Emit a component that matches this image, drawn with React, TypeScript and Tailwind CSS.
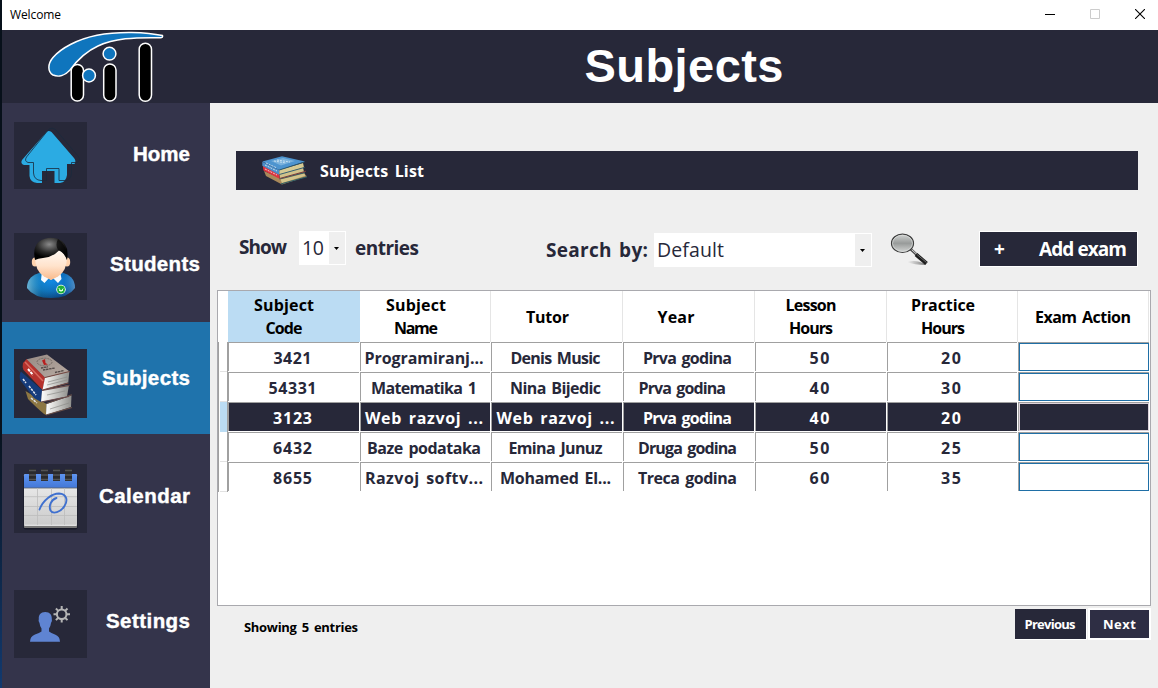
import { useLayoutEffect, useRef, useState } from "react";
import type { ReactNode } from "react";

const comic = "font-['Comic_Sans_MS','Open_Sans',sans-serif]";

/** One line of text, tracked so that it spans `w` pixels. */
function Fit({ w, children, className = "" }: { w: number; children: string; className?: string }) {
  const ref = useRef<HTMLSpanElement>(null);
  const [ls, setLs] = useState(0);
  useLayoutEffect(() => {
    const el = ref.current;
    if (!el || children.length < 2) return;
    el.style.letterSpacing = "0px";
    const next = (w - el.getBoundingClientRect().width) / (children.length - 1);
    el.style.letterSpacing = `${next}px`;
    setLs(next);
  }, [w, children]);
  return (
    <span className={`inline-block whitespace-pre leading-none ${className}`}>
      <span ref={ref} className="inline-block" style={{ letterSpacing: `${ls}px`, marginRight: `${-ls}px` }}>
        {children}
      </span>
    </span>
  );
}

function Logo() {
  return (
    <svg width="118" height="72" viewBox="46 31 118 72" className="block">
      <g stroke="#fff" strokeWidth="1.5">
        <rect x="71.2" y="64.5" width="12.3" height="36.5" rx="6.1" fill="#000" />
        <rect x="103.7" y="64" width="12.3" height="37" rx="6.1" fill="#000" />
        <rect x="139.2" y="43.2" width="12.3" height="58" rx="6.1" fill="#000" />
        <circle cx="89" cy="75.5" r="6.4" fill="#0f75bd" />
        <path
          d="M162.5 35.6C147 31.8 118 31 97 35.2C78 39 61 48 53 57.5C47.500 64 47.500 71.500 53 75C58.500 77.500 65 75.500 70 70C78 59 87 51 98 46C114 38.500 134 37.200 160.500 37.800Q163 37.800 162.500 35.600Z"
          fill="#0f75bd"
        />
        <circle cx="109.500" cy="53.700" r="6.400" fill="#0f75bd" />
      </g>
    </svg>
  );
}

function HomeIcon() {
  return (
    <svg width="73" height="67" viewBox="0 0 73 67" className="block">
      <path
        d="M32.500 10Q34.500 8 37.500 10L60 36Q62.500 39 60.500 42H53V53Q52 60 46 61H40.500V49H28V61H23Q16 60 15.500 54V43H10Q6 41.500 8 38Z"
        fill="#2babe3"
      />
      <path
        d="M35 7Q38 5 41.500 7.500L64 34Q67.500 38.500 63 40.500H57.500V51Q57 58 51 58.500H45V46.500H32.500V58.500H27Q20 58 19.500 51V40.500H14Q10 39 12.500 35Z"
        fill="none"
        stroke="#1a2a3c"
        strokeWidth=".8"
      />
    </svg>
  );
}

function StudentIcon() {
  return (
    <svg width="73" height="67" viewBox="0 0 73 67" className="block">
      <defs>
        <radialGradient id="shirt" cx=".5" cy=".35" r=".65">
          <stop offset="0" stopColor="#0b86e8" />
          <stop offset=".6" stopColor="#0868b4" />
          <stop offset="1" stopColor="#063e78" />
        </radialGradient>
        <linearGradient id="shine" x1="0" y1="0" x2="1" y2="0">
          <stop offset="0" stopColor="#8fd4e8" stopOpacity=".75" />
          <stop offset=".3" stopColor="#2aa0c8" stopOpacity=".25" />
          <stop offset=".75" stopColor="#3a90e0" stopOpacity=".1" />
          <stop offset="1" stopColor="#9cc8f0" stopOpacity=".5" />
        </linearGradient>
        <linearGradient id="skin" x1="0" y1="0" x2="0" y2="1">
          <stop offset=".2" stopColor="#fff6ee" />
          <stop offset=".6" stopColor="#ffe3cc" />
          <stop offset="1" stopColor="#f9b98a" />
        </linearGradient>
        <radialGradient id="hair" cx=".45" cy=".3" r=".6">
          <stop offset="0" stopColor="#8a8a8a" />
          <stop offset=".6" stopColor="#2a2a2a" />
          <stop offset="1" stopColor="#000" />
        </radialGradient>
      </defs>
      <path d="M29 39Q13 42 13 55Q20 65 37 65Q54 65 61 55Q61 42 46 39Z" fill="url(#shirt)" />
      <path d="M29 39Q13 42 13 55Q20 65 37 65Q54 65 61 55Q61 42 46 39Z" fill="url(#shine)" />
      <path d="M28 38L27 47L30.500 50L35 45L37 47L39 45L44 50L47.500 46L46 38Z" fill="#f7fbff" />
      <ellipse cx="21" cy="29" rx="3.200" ry="4.500" fill="#ffd2ad" />
      <ellipse cx="53" cy="29" rx="3.200" ry="4.500" fill="#ffd2ad" />
      <path d="M21 24Q21 12 37 12Q53 12 53 24Q53 38 44 43.500L37 47L30 43.500Q21 38 21 24Z" fill="url(#skin)" />
      <path
        d="M21 27Q17 8 34 5Q37 4.300 43 5.500Q56 10 53 27Q50 19 45 17.500Q39 24 29 25Q24 25.500 21 27Z"
        fill="url(#hair)"
      />
      <path d="M44 6Q54 13 53 27Q50 19 44 17Q41 12 44 6Z" fill="#050505" opacity=".7" />
      <circle cx="47" cy="56.500" r="4.700" fill="#fff" />
      <circle cx="47" cy="56.500" r="3.900" fill="#1fae3a" />
      <path d="M44.800 55L47 58.500L49.200 55.500M45 57.500H49" stroke="#dcffdc" strokeWidth="1" fill="none" />
    </svg>
  );
}

function BooksIcon() {
  return (
    <svg width="73" height="69" viewBox="0 0 73 69" className="block">
      <defs>
        <linearGradient id="pages" x1="0" y1="0" x2="1" y2="0">
          <stop offset="0" stopColor="#fff" />
          <stop offset=".35" stopColor="#d9d9d6" />
          <stop offset="1" stopColor="#8f8f8c" />
        </linearGradient>
        <linearGradient id="cover" x1="0" y1="0" x2="1" y2="1">
          <stop offset="0" stopColor="#978b84" />
          <stop offset="1" stopColor="#b8aba3" />
        </linearGradient>
      </defs>
      <path d="M11.500 42L32.500 55L32 66Q29 65 14 50Z" fill="#8d7743" />
      <path d="M32.500 55L57.500 46.500L57 58L32 66Z" fill="url(#pages)" />
      <path d="M32.500 54.500L57.800 45.800M32 66L58 58.500" stroke="#6b5149" strokeWidth="1.200" />
      <path d="M7 22.500L28 41L27 53L20 49L6 31Q5 25 7 22.500Z" fill="#163c7c" />
      <path d="M28 41.500L55 36L53 47.500L27 53Z" fill="url(#pages)" />
      <path d="M28 41.500L55.500 36.300M27 53L55 47.500" stroke="#6a4a4a" strokeWidth="1.200" />
      <path d="M12.700 10L9 14Q8 18 9.500 21L28.500 41Q30 35 31 28.500Z" fill="#b5322d" />
      <path d="M11 13L29 32" stroke="#da6a5f" strokeWidth="1.500" />
      <path d="M31 28.500L55.300 22.500L54.300 33.500L28.500 41Z" fill="url(#pages)" />
      <path d="M12.700 10.300L33 5.500L55.500 22.500L31 28.500Z" fill="url(#cover)" />
      <path d="M31 28.500L55.500 22.500M28.500 41L54.500 34" stroke="#754a44" strokeWidth="1.200" />
      <ellipse cx="30.500" cy="13" rx="7.500" ry="3.800" fill="none" stroke="#756a64" strokeWidth="1" strokeDasharray="2 1" />
      <path d="M28 11.500L31 10L31.500 14L34 15.500L30 16Z" fill="#b81f1f" />
      <path d="M27 19L34 17.800M29 21L41 19M41 23.500L50 21.500" stroke="#514746" strokeWidth="1.300" strokeDasharray="2.500 .6" />
      <path d="M14 20L19 26" stroke="#fff" strokeWidth="2" strokeDasharray="3 .8" />
      <path d="M9 30L12 34M15 37L22 46M17 49L23 54" stroke="#e3e6ee" strokeWidth="1.500" strokeDasharray="2.500 1" />
      <path d="M34 33L53 28M33 36L53 31M33 46L51 42M36 60L55 54" stroke="#8b8b88" strokeWidth=".7" />
    </svg>
  );
}

function CalendarIcon() {
  return (
    <svg width="73" height="69" viewBox="0 0 73 69" className="block">
      <defs>
        <linearGradient id="sheet" x1="0" y1="0" x2="0" y2="1">
          <stop offset="0" stopColor="#f1f1f1" />
          <stop offset="1" stopColor="#c9c9c9" />
        </linearGradient>
        <linearGradient id="band" x1="0" y1="0" x2="0" y2="1">
          <stop offset="0" stopColor="#5d94f2" />
          <stop offset="1" stopColor="#4377d6" />
        </linearGradient>
      </defs>
      <rect x="9.500" y="12" width="54" height="53.500" rx="2" fill="#171827" />
      <rect x="10" y="10" width="53" height="53.700" rx="1.500" fill="url(#sheet)" />
      <path d="M10 61.500H63V62.500Q63 64 61 64H12Q10 64 10 62.500Z" fill="#777" />
      <path d="M10.500 61.300H62.500" stroke="#f2f2f2" />
      <path d="M10 24V11.500Q10 10 11.500 10H61.500Q63 10 63 11.500V24Z" fill="url(#band)" />
      <path d="M10 24H63" stroke="#5c5f66" strokeWidth=".8" />
      <path d="M23.500 24V61M37.500 24V61M50.500 24V61M10 32.700H63M10 42.500H63M10 51.500H63" stroke="#bdbdbd" strokeWidth=".8" />
      <g fill="#2a2a2c">
        <rect x="15" y="5" width="7" height="12" />
        <rect x="27" y="5" width="7" height="12" />
        <rect x="39" y="5" width="7" height="12" />
        <rect x="51" y="5" width="7" height="12" />
      </g>
      <path
        d="M15 6.500H22M27 6.500H34M39 6.500H46M51 6.500H58M15 11H22M27 11H34M39 11H46M51 11H58M15 15.500H22M27 15.500H34M39 15.500H46M51 15.500H58"
        stroke="#525355"
        strokeWidth="1.500"
      />
      <path
        d="M25.500 45.500C29 36 38 29.500 45 29.500C53 30 54 36.500 50.500 42C46.500 48.500 39 50.500 36.500 46.500C34.500 42 37 35.500 42.500 34"
        fill="none"
        stroke="#3f70cf"
        strokeWidth="1.900"
        strokeLinecap="round"
      />
    </svg>
  );
}

function SettingsIcon() {
  return (
    <svg width="73" height="68" viewBox="0 0 73 68" className="block">
      <path
        d="M31.300 22C36 22 38 25 37.800 29Q38.500 31.500 37 33Q36.500 37 35 38.500V41.500Q37 43 41 44.500Q46 46.500 46 51.800H16Q16 46.500 21 44.500Q25.500 43 27.500 41.500V38.500Q26 37 25.500 33Q24 31.500 24.800 29C24.500 25 26.500 22 31.300 22Z"
        fill="#5f84d2"
      />
      <circle cx="47.700" cy="24.300" r="4.800" fill="none" stroke="#b5b5b5" strokeWidth="2.100" />
      <path
        d="M47.700 16V19.500M47.700 29V32.600M39.500 24.300H43M52.500 24.300H56M41.900 18.500L44.300 20.900M51.100 27.700L53.500 30.100M53.500 18.500L51.100 20.900M44.300 27.700L41.900 30.100"
        stroke="#b5b5b5"
        strokeWidth="2"
      />
    </svg>
  );
}

function SmallBooks() {
  return (
    <svg width="46" height="29" viewBox="0 0 46 29" className="block">
      <path d="M2 15L18 22L42 17L45 20.500L20 28.500L4 20Z" fill="#a9895a" />
      <path d="M18.500 23.500L42.500 17.500L43 20L20 27Z" fill="#d3c58c" />
      <path d="M19 27.900L45 20.800M17.500 23L43 16.500" stroke="#2f6168" strokeWidth="1" />
      <path d="M.8 9.500L17.500 18V22.800L1.500 14.500Z" fill="#e0323d" />
      <path d="M17.500 18L41 11.500L42 16L18 22.500Z" fill="#d0c28a" />
      <path d="M17.500 22.500L44 15.200" stroke="#7d3b3b" strokeWidth="1" />
      <path d="M.3 5.700L17.300 14V19L.3 9.800Z" fill="#4b8fc9" />
      <path d="M17.300 14L41 7L42 11.500L17.300 18.500Z" fill="#d6ca93" />
      <path d="M.3 5.500L20 .3L43 5.500L17.300 14Z" fill="#4d94cf" />
      <path d="M9 5L21 2L33 5L19 9.500Z" fill="#84b8df" opacity=".8" />
      <path d="M12 5L24 7M15 4L28 6M4 7L15 12" stroke="#d8ebf6" strokeWidth=".8" strokeDasharray="2 1" />
      <path d="M17.300 18.500L43 11.300M17.300 14L42.500 6" stroke="#27566d" strokeWidth=".9" />
      <path d="M3 9L15 15M3 13L15 19" stroke="#e8eef6" strokeWidth=".8" strokeDasharray="2 1" />
    </svg>
  );
}

function Magnifier() {
  return (
    <svg width="40" height="36" viewBox="0 0 40 36" className="block">
      <defs>
        <linearGradient id="lens" x1="0" y1="0" x2="0" y2="1">
          <stop offset="0" stopColor="#d3d5d4" />
          <stop offset=".5" stopColor="#989b9a" />
          <stop offset="1" stopColor="#d5d7d6" />
        </linearGradient>
        <linearGradient id="shade" x1="0" y1="0" x2="1" y2="0">
          <stop offset="0" stopColor="#777" stopOpacity="0" />
          <stop offset="1" stopColor="#555" stopOpacity=".8" />
        </linearGradient>
      </defs>
      <path d="M17 31Q25 28.500 33 32L36 34Q24 34 17 31Z" fill="url(#shade)" />
      <path d="M20.500 18L28 25" stroke="#4c4c4c" strokeWidth="2.600" />
      <path d="M21.500 18.500L27 23.500" stroke="#d8d8d8" strokeWidth="1" />
      <path d="M26 23.500L36.500 32.500" stroke="#1d1d1d" strokeWidth="4" />
      <path d="M27 23.500L36.500 31.500" stroke="#777" strokeWidth=".9" />
      <ellipse cx="12.500" cy="12.300" rx="11" ry="9.200" fill="url(#lens)" stroke="#3c3c3c" strokeWidth="1.200" />
      <ellipse cx="12.500" cy="12.300" rx="10" ry="8.200" fill="none" stroke="#e3e5e4" strokeWidth=".7" />
    </svg>
  );
}

function Caret() {
  return (
    <svg width="5" height="3" viewBox="0 0 5 3" className="block">
      <path d="M0 0H5L2.500 3Z" fill="#000" />
    </svg>
  );
}

type NavItem = { label: string; w: number; box: string; tile: string; text: string; icon: ReactNode };

const nav: NavItem[] = [
  { label: "Home", w: 57, box: "h-[107px] pt-[19px] pr-5", tile: "h-[67px]", text: "pb-[3px]", icon: <HomeIcon /> },
  { label: "Students", w: 90, box: "h-[112px] pt-[23px] pr-2.5", tile: "h-[67px]", text: "pb-[5px]", icon: <StudentIcon /> },
  { label: "Subjects", w: 88, box: "h-[112px] pt-[27px] pr-5 bg-[#1f73ac]", tile: "h-[69px]", text: "pb-[11px]", icon: <BooksIcon /> },
  { label: "Calendar", w: 91, box: "h-[112px] pt-[30px] pr-5", tile: "h-[69px]", text: "pb-[5px]", icon: <CalendarIcon /> },
  { label: "Settings", w: 84, box: "h-[142px] pt-[44px] pr-5", tile: "h-[68px]", text: "pb-[6px]", icon: <SettingsIcon /> },
];

const headers: { lines: [string, number][]; cls: string }[] = [
  { lines: [["Subject", 60], ["Code", 37]], cls: "bg-[#bbdcf3] pr-5" },
  { lines: [["Subject", 60], ["Name", 44]], cls: "pr-[18px] border-r border-[#e5e5e5]" },
  { lines: [["Tutor", 43]], cls: "pr-[18px] border-r border-[#e5e5e5]" },
  { lines: [["Year", 37]], cls: "pr-[25px] border-r border-[#e5e5e5]" },
  { lines: [["Lesson", 51], ["Hours", 44]], cls: "pr-[19px] border-r border-[#e5e5e5]" },
  { lines: [["Practice", 64], ["Hours", 44]], cls: "pr-[18px] border-r border-[#e5e5e5]" },
  { lines: [["Exam Action", 96]], cls: "border-r border-[#e5e5e5]" },
];

const rows: { cells: [string, number][]; selected?: boolean }[] = [
  { cells: [["3421", 38], ["Programiranj...", 119], ["Denis Music", 90], ["Prva godina", 89], ["50", 20], ["20", 20]] },
  { cells: [["54331", 48], ["Matematika 1", 106], ["Nina Bijedic", 91], ["Prva godina  ", 98], ["40", 20], ["30", 20]] },
  { cells: [["3123", 39], ["Web razvoj ...", 118], ["Web razvoj ...", 118], ["Prva godina", 89], ["40", 20], ["20", 20]], selected: true },
  { cells: [["6432", 39], ["Baze podataka", 114], ["Emina Junuz", 94], ["Druga godina", 99], ["50", 20], ["25", 20]] },
  { cells: [["8655", 39], ["Razvoj softv...", 118], ["Mohamed El...", 111], ["Treca godina", 99], ["60", 20], ["35", 20]] },
];

const columns = "grid grid-cols-[10px_132px_131px_132px_132px_132px_131px_131px]";

export default function App() {
  return (
    <div className="flex h-[688px] w-[1158px] overflow-hidden bg-[#efefef]">
      <div className="w-[2px] shrink-0 bg-linear-to-b from-[#07101a] from-60% to-[#123a70]" />
      <div className="flex min-w-0 grow flex-col">
        <div className="flex h-[30px] shrink-0 items-center justify-between bg-white pl-2 pr-[13px]">
          <Fit w={51} className="font-['Segoe_UI','Open_Sans',sans-serif] text-[12px] text-black">Welcome</Fit>
          <div className="flex items-center gap-[35px] pb-[2px]">
            <svg width="10" height="10" viewBox="0 0 10 10"><path d="M0 5.500H10" stroke="#000" /></svg>
            <svg width="10" height="10" viewBox="0 0 10 10"><path d="M.5 .5H9.500V9.500H.5Z" fill="none" stroke="#ccc" /></svg>
            <svg width="10" height="10" viewBox="0 0 10 10"><path d="M0 0L10 10M10 0L0 10" stroke="#000" strokeWidth="1.100" /></svg>
          </div>
        </div>

        <header className="flex h-[73px] shrink-0 bg-[#272839]">
          <div className="w-[208px] pl-[44px] pt-[1px]"><Logo /></div>
          <h1 className="flex grow items-center justify-center pb-[2px] font-['Arial_Rounded_MT_Bold','Liberation_Sans',sans-serif] text-[47px] font-bold text-white">
            <Fit w={199}>Subjects</Fit>
          </h1>
        </header>

        <div className="flex min-h-0 grow">
          <nav className="flex w-[208px] shrink-0 flex-col bg-[#34344b] font-['Liberation_Sans',Arial,sans-serif] text-[20.5px] font-bold text-white [-webkit-text-stroke:0.4px_#fff]">
            {nav.map((n) => (
              <a key={n.label} className={`shrink-0 pl-3 ${n.box}`}>
                <span className="flex items-center justify-between">
                  <span className={`w-[73px] bg-[#272839] ${n.tile}`}>{n.icon}</span>
                  <span className={`flex ${n.text}`}><Fit w={n.w}>{n.label}</Fit></span>
                </span>
              </a>
            ))}
          </nav>

          <main className={`flex grow flex-col ${comic} text-[16px] font-bold text-[#272839] [word-spacing:2px]`}>
            <div className="ml-[26px] mt-12 flex h-[39px] w-[902px] shrink-0 items-center bg-[#272839] pl-[26px] text-white">
              <SmallBooks />
              <Fit w={104} className="ml-3">Subjects List</Fit>
            </div>

            <div className="mt-[41px] flex h-9 shrink-0 items-start pl-[29px] text-[19px]">
              <Fit w={48} className="mt-[7px]">Show</Fit>
              <div className="ml-3 flex h-[34px] w-[47px] border border-white bg-white">
                <div className="flex w-[29px] items-center justify-center pb-px pr-[3px] text-[19.5px] font-normal"><Fit w={22}>10</Fit></div>
                <div className="flex grow items-center justify-center bg-[#efefef]"><Caret /></div>
              </div>
              <Fit w={64} className="ml-[9px] mt-2">entries</Fit>
              <Fit w={102} className="ml-[127px] mt-[10px]">Search by:</Fit>
              <div className="ml-[6px] mt-[2px] flex h-[34px] w-[218px] border border-white bg-white">
                <div className="flex w-[200px] items-center pb-px pl-[2px] text-[19.5px] font-normal"><Fit w={67}>Default</Fit></div>
                <div className="flex grow items-center justify-center bg-[#efefef]"><Caret /></div>
              </div>
              <div className="ml-[18px]"><Magnifier /></div>
              <button className="ml-[49px] flex h-9 w-[159px] items-center justify-between border border-white bg-[#272839] pl-[14px] pr-[10px] text-white">
                <Fit w={12}>+</Fit>
                <Fit w={88}>Add exam</Fit>
              </button>
            </div>

            <section className="ml-[7px] mt-[23px] h-[316px] w-[934px] shrink-0 border border-[#a9a9ae] bg-white">
              <div className={`${columns} h-[51px] text-black`}>
                <div />
                {headers.map((h, i) => (
                  <div key={i} className={`flex flex-col items-center justify-center ${h.cls}`}>
                    {h.lines.map(([t, w], j) => (
                      <div key={j} className="flex h-[23px] items-center"><Fit w={w}>{t}</Fit></div>
                    ))}
                  </div>
                ))}
              </div>
              {rows.map((r, i) => (
                <div key={i} className={`${columns} h-[30px]`}>
                  <div className="flex h-[30px] border-l border-r border-[#a0a0a0]">
                    <div className={r.selected ? "ml-px grow bg-[#bbdcf3]" : "ml-px grow border-b border-[#e2e2e2]"} />
                  </div>
                  {r.cells.map(([t, w], j) => (
                    <div key={j} className="border-b border-r border-white">
                      <div
                        className={
                          r.selected
                            ? "flex h-[29px] items-center justify-center border-l border-t border-[#a0a0a0] bg-[#272839] pr-[3px] pt-[2px] text-white"
                            : "flex h-[29px] items-center justify-center border-l border-t border-[#a0a0a0] pr-[3px] pt-[2px]"
                        }
                      >
                        <Fit w={w}>{t}</Fit>
                      </div>
                    </div>
                  ))}
                  <div className="border-b border-white">
                    <div className="h-[29px] border-l border-t border-[#a0a0a0]">
                      <div className={r.selected ? "h-7 border border-[#ddd3db] bg-[#272839]" : "h-7 border border-[#1f6fa6]"} />
                    </div>
                  </div>
                </div>
              ))}
            </section>

            <footer className="flex items-start pl-[34px] pr-[7px] pt-[3px] text-[13px]">
              <Fit w={114} className="mt-[12px] text-black">Showing 5 entries</Fit>
              <div className="ml-auto flex items-start gap-px text-white">
                <button className="flex h-[31px] w-[72px] items-center justify-center border-b border-r border-white bg-[#272839] pr-px">
                  <Fit w={51}>Previous</Fit>
                </button>
                <button className="-mt-px flex h-8 w-[63px] items-center justify-center border-2 border-white bg-[#2e2e44]">
                  <Fit w={33}>Next</Fit>
                </button>
              </div>
            </footer>
          </main>
        </div>
      </div>
    </div>
  );
}
